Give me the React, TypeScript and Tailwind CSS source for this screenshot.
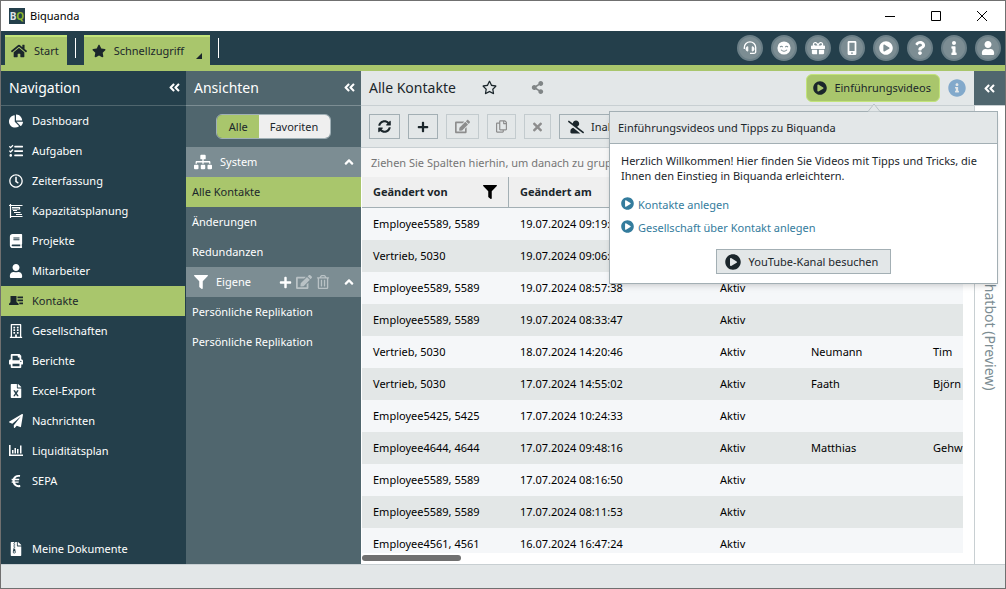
import type { ReactNode } from "react";
import type { IconType } from "react-icons";
import {
  FaAngleDoubleLeft,
  FaAngleUp,
  FaBook,
  FaChartPie,
  FaEdit,
  FaEuroSign,
  FaFileArchive,
  FaFileExcel,
  FaFilter,
  FaGift,
  FaHome,
  FaInfo,
  FaInfoCircle,
  FaPaperPlane,
  FaPlayCircle,
  FaPlus,
  FaPrint,
  FaQuestion,
  FaRegBuilding,
  FaRegClock,
  FaRegCopy,
  FaRegStar,
  FaRegTrashAlt,
  FaShareAlt,
  FaSitemap,
  FaStar,
  FaSyncAlt,
  FaTasks,
  FaTimes,
  FaUser,
  FaUserSlash,
} from "react-icons/fa";

type IconProps = { className?: string };

function GanttIcon({ className }: IconProps) {
  return (
    <svg viewBox="0 0 14 14" className={className} fill="none" stroke="currentColor" aria-hidden="true">
      <path d="M1.5 0v14M0 1.5h13.500M1 12.500h12.500" strokeWidth="1.200" />
      <path d="M3 3.500h7.500v1.500H3M4 6.500h4M5 8.500h6.500M7 10.500h6" strokeWidth="1.200" />
    </svg>
  );
}

function ContactsIcon({ className }: IconProps) {
  return (
    <svg viewBox="0 0 14 14" className={className} fill="currentColor" aria-hidden="true">
      <path d="M1.500 2h6v5.500c0 .7.4 1 1 1.300.8.3 1.200.9 1.200 2.200H0c0-1.300.3-1.900 1-2.200.4-.3.5-.6.5-1.300z" />
      <path d="M8.500 2.500H14v1.700H8.500zM8.500 5.500H14v1.700H8.500zM10.300 8.500H14v1.700h-3.700z" />
    </svg>
  );
}

function LiquidityIcon({ className }: IconProps) {
  return (
    <svg viewBox="0 0 14 14" className={className} fill="currentColor" aria-hidden="true">
      <path d="M0 1h1.600v9.400H14V12H0z" />
      <path d="M3 6h1.500v3.500H3zM5.500 4H7v5.500H5.500zM8 5h1.500v4.500H8zM11 1.500h1.500v8H11z" />
    </svg>
  );
}

function HeadsetIcon({ className }: IconProps) {
  return (
    <svg viewBox="0 0 16 16" className={className} fill="none" stroke="currentColor" strokeWidth="1.500" aria-hidden="true">
      <path d="M1.500 9V7.500a6.500 6.500 0 0 1 13 0V12a2 2 0 0 1-2 2.200H8" />
      <path
        d="M5.500 6.500v5H5A2 2 0 0 1 3.500 10V8A2 2 0 0 1 5 6.500zM10.500 6.500v5h.5a2 2 0 0 0 1.500-1.500V8A2 2 0 0 0 11 6.500z"
        fill="currentColor"
        strokeWidth="1"
      />
    </svg>
  );
}

function SmileIcon({ className }: IconProps) {
  return (
    <svg viewBox="0 0 16 16" className={className} aria-hidden="true">
      <circle cx="8" cy="8" r="7.500" fill="currentColor" />
      <path
        d="M3.500 7q1.500-2 3 0M9.500 7q1.500-2 3 0M4.500 10q3.500 3.500 7 0"
        fill="none"
        stroke="#7c8d93"
        strokeWidth="1.200"
      />
    </svg>
  );
}

function PhoneIcon({ className }: IconProps) {
  return (
    <svg viewBox="0 0 16 16" className={className} fill="currentColor" fillRule="evenodd" aria-hidden="true">
      <path d="M4.500 0h7A1.500 1.500 0 0 1 13 1.500v13a1.500 1.500 0 0 1-1.500 1.500h-7A1.500 1.500 0 0 1 3 14.500v-13A1.500 1.500 0 0 1 4.500 0zM5 2v9.500h6V2zM8 12.800a1 1 0 1 0 0 2 1 1 0 0 0 0-2z" />
    </svg>
  );
}

const navItems: { label: string; icon: IconType | typeof GanttIcon; active?: boolean }[] = [
  { label: "Dashboard", icon: FaChartPie },
  { label: "Aufgaben", icon: FaTasks },
  { label: "Zeiterfassung", icon: FaRegClock },
  { label: "Kapazitätsplanung", icon: GanttIcon },
  { label: "Projekte", icon: FaBook },
  { label: "Mitarbeiter", icon: FaUser },
  { label: "Kontakte", icon: ContactsIcon, active: true },
  { label: "Gesellschaften", icon: FaRegBuilding },
  { label: "Berichte", icon: FaPrint },
  { label: "Excel-Export", icon: FaFileExcel },
  { label: "Nachrichten", icon: FaPaperPlane },
  { label: "Liquiditätsplan", icon: LiquidityIcon },
  { label: "SEPA", icon: FaEuroSign },
];

const topActions = [
  { label: "Support", icon: HeadsetIcon },
  { label: "Feedback", icon: SmileIcon },
  { label: "Neuigkeiten", icon: FaGift },
  { label: "App", icon: PhoneIcon },
  { label: "Videos", icon: FaPlayCircle },
  { label: "Hilfe", icon: FaQuestion },
  { label: "Info", icon: FaInfo },
  { label: "Benutzer", icon: FaUser },
];

const rows = [
  ["Employee5589, 5589", "19.07.2024 09:19:22", "Aktiv", "", ""],
  ["Vertrieb, 5030", "19.07.2024 09:06:10", "Aktiv", "", ""],
  ["Employee5589, 5589", "19.07.2024 08:57:38", "Aktiv", "", ""],
  ["Employee5589, 5589", "19.07.2024 08:33:47", "Aktiv", "", ""],
  ["Vertrieb, 5030", "18.07.2024 14:20:46", "Aktiv", "Neumann", "Tim"],
  ["Vertrieb, 5030", "17.07.2024 14:55:02", "Aktiv", "Faath", "Björn"],
  ["Employee5425, 5425", "17.07.2024 10:24:33", "Aktiv", "", ""],
  ["Employee4644, 4644", "17.07.2024 09:48:16", "Aktiv", "Matthias", "Gehweiler"],
  ["Employee5589, 5589", "17.07.2024 08:16:50", "Aktiv", "", ""],
  ["Employee5589, 5589", "17.07.2024 08:11:53", "Aktiv", "", ""],
  ["Employee4561, 4561", "16.07.2024 16:47:24", "Aktiv", "", ""],
];

function TitleBar() {
  return (
    <header className="flex h-[30px] shrink-0 items-center bg-white pl-2 text-black">
      <span className="flex size-4 items-center justify-center bg-[#243f4b] text-[10px] leading-none font-bold text-[#dfe3e5]">
        B<span className="text-[#8fb82e]">Q</span>
      </span>
      <span className="ml-[5px]">Biquanda</span>
      <div className="ml-auto flex h-full">
        <button aria-label="Minimieren" className="flex w-[46px] items-center justify-center">
          <svg viewBox="0 0 10 10" className="size-[10px]" stroke="black">
            <path d="M0 5.500h10" />
          </svg>
        </button>
        <button aria-label="Maximieren" className="flex w-[46px] items-center justify-center">
          <svg viewBox="0 0 10 10" className="size-[10px]" fill="none" stroke="black">
            <path d="M.5.5h9v9h-9z" />
          </svg>
        </button>
        <button aria-label="Schließen" className="flex w-[46px] items-center justify-center">
          <svg viewBox="0 0 10 10" className="size-[10px]" stroke="black">
            <path d="M0 0l10 10M10 0L0 10" />
          </svg>
        </button>
      </div>
    </header>
  );
}

function TopBar() {
  return (
    <div className="flex h-10 shrink-0 border-b-[6px] border-[#a9c66c] bg-[#243f4b] pl-1">
      <button className="mt-1 flex items-center gap-[7px] border-t-2 border-[#c2e47a] bg-[#a9c66c] pr-2 pl-[6px] text-[#1b262b]">
        <FaHome className="size-4" />
        Start
      </button>
      <span className="mx-2 h-5 w-px self-center bg-white" />
      <button className="relative mt-1 flex items-center gap-2 border-t-2 border-[#c2e47a] bg-[#a9c66c] pr-[26px] pl-2 text-[#1b262b]">
        <FaStar className="size-[14px]" />
        Schnellzugriff
        <svg viewBox="0 0 6 6" className="absolute right-2 bottom-[6px] size-[6px]" fill="currentColor">
          <path d="M6 0v6H0z" />
        </svg>
      </button>
      <span className="mx-2 h-5 w-px self-center bg-white" />
      <div className="ml-auto flex items-center gap-2 pr-1">
        {topActions.map(({ label, icon: Icon }) => (
          <button
            key={label}
            aria-label={label}
            className="flex size-[26px] items-center justify-center rounded-full border-2 border-[#6b7f87] bg-[#7c8d93] text-white"
          >
            <Icon className="size-[14px]" />
          </button>
        ))}
      </div>
    </div>
  );
}

function Navigation() {
  return (
    <nav className="flex w-[185px] shrink-0 flex-col bg-[#243f4b] text-white">
      <div className="flex h-[35px] shrink-0 items-center justify-between border-b border-[#50666e] pr-[5px] pl-2">
        <h2 className="text-sm">Navigation</h2>
        <button aria-label="Navigation einklappen" className="pb-[2px]">
          <FaAngleDoubleLeft className="size-[13px]" />
        </button>
      </div>
      {navItems.map(({ label, icon: Icon, active }) => (
        <a
          key={label}
          href="#"
          className={`mr-px flex h-[30px] shrink-0 items-center gap-[9px] pl-2 ${active ? "bg-[#a9c66c] text-[#1b262b]" : ""}`}
        >
          <Icon className="size-[14px]" />
          {label}
        </a>
      ))}
      <a href="#" className="mt-auto flex h-[30px] shrink-0 items-center gap-[9px] pl-2">
        <FaFileArchive className="size-[14px]" />
        Meine Dokumente
      </a>
    </nav>
  );
}

function ViewLink({ children, active }: { children: ReactNode; active?: boolean }) {
  return (
    <a href="#" className={`flex h-[30px] items-center pl-[6px] ${active ? "bg-[#a9c66c] text-[#1b262b]" : ""}`}>
      {children}
    </a>
  );
}

function Views() {
  return (
    <aside className="w-[175px] shrink-0 bg-[#50666e] text-white">
      <div className="flex h-[35px] items-center justify-between border-b border-[#7c8d93] pr-[5px] pl-2">
        <h2 className="text-sm">Ansichten</h2>
        <button aria-label="Ansichten einklappen" className="pb-[2px]">
          <FaAngleDoubleLeft className="size-[13px]" />
        </button>
      </div>
      <div className="flex h-[41px] items-center justify-center">
        <div className="flex h-[25px] overflow-hidden rounded-md border border-[#a0b0b6] text-[#1b262b]">
          <button className="bg-[#a9c66c] pr-[11px] pl-3">Alle</button>
          <button className="bg-[#efefef] pr-3 pl-[11px]">Favoriten</button>
        </div>
      </div>
      <div className="flex h-[30px] items-center bg-[#7c8d93] pr-[5px] pl-2">
        <FaSitemap className="size-[18px]" />
        <span className="ml-2">System</span>
        <button aria-label="System einklappen" className="ml-auto">
          <FaAngleUp className="size-[14px]" />
        </button>
      </div>
      <ViewLink active>Alle Kontakte</ViewLink>
      <ViewLink>Änderungen</ViewLink>
      <ViewLink>Redundanzen</ViewLink>
      <div className="flex h-[30px] items-center bg-[#7c8d93] pr-[5px] pl-2">
        <FaFilter className="size-[14px]" />
        <span className="ml-2">Eigene</span>
        <div className="ml-auto flex items-center gap-1">
          <button aria-label="Neue Ansicht">
            <FaPlus className="size-[13px]" />
          </button>
          <button aria-label="Ansicht bearbeiten" disabled className="text-[#b9c2c5]">
            <FaEdit className="size-4" />
          </button>
          <button aria-label="Ansicht löschen" disabled className="text-[#b9c2c5]">
            <FaRegTrashAlt className="size-[14px]" />
          </button>
        </div>
        <button aria-label="Eigene einklappen" className="ml-3">
          <FaAngleUp className="size-[14px]" />
        </button>
      </div>
      <ViewLink>Persönliche Replikation</ViewLink>
      <ViewLink>Persönliche Replikation</ViewLink>
    </aside>
  );
}

function ToolButton({ label, disabled, children }: { label: string; disabled?: boolean; children: ReactNode }) {
  return (
    <button
      aria-label={label}
      disabled={disabled}
      className="flex h-[25px] shrink-0 items-center gap-[7px] border border-[#a3afb4] px-2 text-[#1b262b] disabled:border-[#c3cbce] disabled:text-[#8d8d8d]"
    >
      {children}
    </button>
  );
}

function Contacts() {
  return (
    <main className="flex min-w-0 flex-1 flex-col bg-white">
      <div className="flex h-[35px] shrink-0 items-center border-b border-[#c8cfd2] bg-[#e3e7e8] pr-2 pl-2 text-[#1b262b]">
        <h1 className="text-sm">Alle Kontakte</h1>
        <button aria-label="Als Favorit markieren" className="ml-[26px] pb-[2px]">
          <FaRegStar className="size-[15px]" />
        </button>
        <button aria-label="Teilen" className="ml-[34px] pb-[2px] text-[#808586]">
          <FaShareAlt className="size-[13px]" />
        </button>
        <button className="ml-auto flex h-7 items-center gap-[7px] rounded-md border border-[#c2e47a] bg-[#a9c66c] pr-2 pl-[6px]">
          <FaPlayCircle className="size-[14px]" />
          Einführungsvideos
        </button>
        <button aria-label="Hinweise" className="ml-2 text-[#82a9cb]">
          <FaInfoCircle className="size-[18px]" />
        </button>
      </div>
      <div className="flex h-[42px] shrink-0 items-center gap-2 overflow-hidden border-b border-[#c8cfd2] bg-[#e3e7e8] pl-2">
        <ToolButton label="Aktualisieren">
          <FaSyncAlt className="size-[13px]" />
        </ToolButton>
        <ToolButton label="Neu">
          <FaPlus className="size-3" />
        </ToolButton>
        <ToolButton label="Bearbeiten" disabled>
          <FaEdit className="size-[15px]" />
        </ToolButton>
        <ToolButton label="Kopieren" disabled>
          <FaRegCopy className="h-[13px] w-[11px]" />
        </ToolButton>
        <ToolButton label="Löschen" disabled>
          <FaTimes className="h-4 w-[9px]" />
        </ToolButton>
        <ToolButton label="Inaktive">
          <FaUserSlash className="size-4" />
          Inaktive
        </ToolButton>
      </div>
      <div className="mr-[11px] flex h-[29px] shrink-0 items-center bg-[#f6f6f6] pl-[10px] text-[#757575]">
        Ziehen Sie Spalten hierhin, um danach zu gruppieren
      </div>
      <div className="mr-[11px] ml-px min-h-0 flex-1 overflow-hidden">
        <table className="w-full table-fixed border-separate border-spacing-0 text-left text-black">
          <colgroup>
            <col className="w-[147px]" />
            <col className="w-[200px]" />
            <col className="w-[91px]" />
            <col className="w-[122px]" />
            <col />
          </colgroup>
          <thead className="bg-[#efefef] text-[#1b262b]">
            <tr className="h-[31px]">
              <th className="border-r border-b border-[#a3afb4] px-[11px]">
                <div className="flex items-center justify-between">
                  Geändert von
                  <FaFilter className="size-[14px] text-black" />
                </div>
              </th>
              <th className="border-r border-b border-[#a3afb4] px-[11px]">Geändert am</th>
              <th className="border-r border-b border-[#a3afb4] px-[11px]">Status</th>
              <th className="border-r border-b border-[#a3afb4] px-[11px]">Name</th>
              <th className="border-b border-[#a3afb4]" />
            </tr>
          </thead>
          <tbody>
            {rows.map((row, i) => (
              <tr key={i} className="h-8 odd:bg-[#f5f7f9] even:bg-[#e3e7e7]">
                {row.map((cell, j) => (
                  <td key={j} className="overflow-hidden pl-[11px] whitespace-nowrap">
                    {cell}
                  </td>
                ))}
              </tr>
            ))}
          </tbody>
        </table>
      </div>
      <div className="h-[11px] shrink-0 pt-[2px] pl-px">
        <div className="h-[6px] w-[99px] rounded-full bg-[#707070]" />
      </div>
    </main>
  );
}

function ChatbotPanel() {
  return (
    <aside className="flex w-[31px] shrink-0 flex-col border-l border-[#c8cfd2] bg-white">
      <div className="-ml-px flex h-[35px] shrink-0 items-center justify-center border-b border-[#c8cfd2] bg-[#50666e] text-white">
        <button aria-label="Chatbot ausklappen">
          <FaAngleDoubleLeft className="size-[13px]" />
        </button>
      </div>
      <div className="flex flex-1 items-center justify-center pb-1 text-sm text-[#7c8d93] [writing-mode:vertical-rl]">
        Chatbot (Preview)
      </div>
    </aside>
  );
}

function IntroPopup() {
  return (
    <div
      role="dialog"
      aria-labelledby="intro-title"
      className="absolute top-[110px] right-[7px] w-[389px] border border-[#a3afb4] bg-white text-[#1b262b] shadow-md"
    >
      <svg viewBox="0 0 12 9" className="absolute -top-[9px] left-[258px] h-[9px] w-3" fill="#e3e7e8" stroke="#b9c2c5">
        <path d="M0 8.500L6 1l6 7.500" />
      </svg>
      <h3 id="intro-title" className="flex h-8 items-center border-b border-[#a3afb4] bg-[#e3e7e8] px-2">
        Einführungsvideos und Tipps zu Biquanda
      </h3>
      <div className="px-[11px] pt-[9px] pb-[9px]">
        <p className="leading-[15px]">
          Herzlich Willkommen! Hier finden Sie Videos mit Tipps und Tricks, die Ihnen den Einstieg in Biquanda
          erleichtern.
        </p>
        <ul className="mt-[10px] text-[#347c9d]">
          {["Kontakte anlegen", "Gesellschaft über Kontakt anlegen"].map((text) => (
            <li key={text}>
              <a href="#" className="flex h-[23px] items-center gap-1">
                <FaPlayCircle className="mb-[3px] size-[13px]" />
                {text}
              </a>
            </li>
          ))}
        </ul>
        <button className="mx-auto mt-[10px] flex h-[25px] items-center gap-2 border border-[#a3afb4] bg-[#e3e7e8] pr-3 pl-2">
          <FaPlayCircle className="size-4" />
          YouTube-Kanal besuchen
        </button>
      </div>
    </div>
  );
}

export default function App() {
  return (
    <div className="relative flex h-screen flex-col overflow-hidden border border-[#707070] bg-[#e3e7e8] font-['Noto_Sans',sans-serif] text-[11px] leading-4">
      <TitleBar />
      <TopBar />
      <div className="flex min-h-0 flex-1">
        <Navigation />
        <Views />
        <Contacts />
        <ChatbotPanel />
      </div>
      <footer className="h-6 shrink-0 border-t border-[#c8cfd2]" />
      <IntroPopup />
    </div>
  );
}
